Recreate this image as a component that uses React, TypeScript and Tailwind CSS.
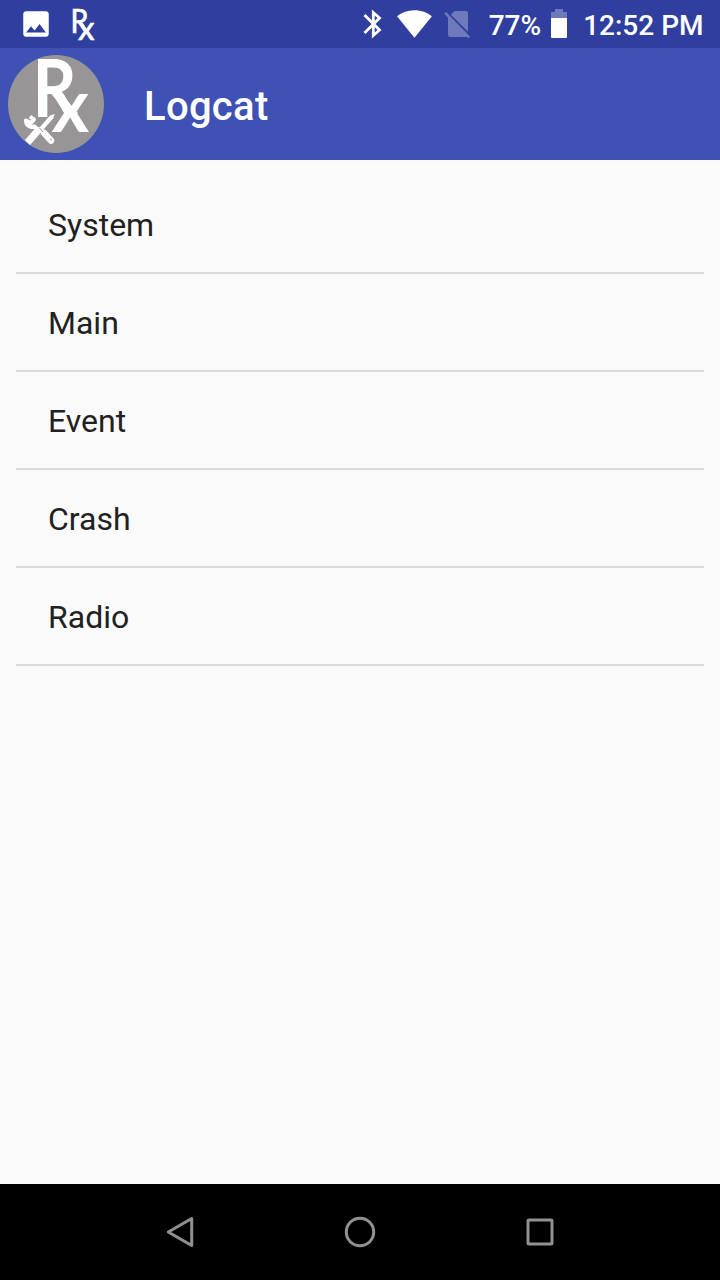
const logs = ["System", "Main", "Event", "Crash", "Radio"];

function RxGlyph() {
  return (
    <svg width="26" height="40" viewBox="0 0 26 40" className="ml-[20px] shrink-0 overflow-visible font-['Lato',sans-serif] font-normal" fill="#fff" stroke="#fff" strokeWidth="0.7">
      <text transform="translate(-2.6 28.800) scale(0.86 1)" fontSize="33.500">R</text>
      <text transform="translate(5 35.500)" fontSize="33">x</text>
    </svg>
  );
}

function StatusBar() {
  return (
    <header className="flex h-12 items-center bg-[#303f9f] font-['Roboto',sans-serif] text-[28px] leading-none font-medium text-white">
      <svg width="34" height="34" viewBox="0 0 24 24" className="ml-[19px] shrink-0" fill="currentColor">
        <path d="M21 19V5c0-1.1-.9-2-2-2H5c-1.1 0-2 .9-2 2v14c0 1.1.9 2 2 2h14c1.1 0 2-.9 2-2zM8.5 13.5l2.5 3.01L14.5 12l4.5 6H5l3.5-4.5z" />
      </svg>
      <RxGlyph />
      <div className="ml-auto flex h-12 items-center pr-[16.500px]">
        <svg width="20" height="30" viewBox="0 0 20 30" className="shrink-0" fill="none" stroke="currentColor" strokeWidth="2.8">
          <path d="M1.500 6 16.500 21 10.300 26.500V3.500L16.500 9 1.500 24" />
        </svg>
        <svg width="36" height="28" viewBox="0 0 36 28" className="ml-[14px] shrink-0" fill="currentColor">
          <path d="M0 6.2C4.700 2.400 10.700 .2 17.400 .2S30.400 2.400 34.900 6.200L17.450 27.700Z" />
        </svg>
        <svg width="27" height="29" viewBox="0 0 27 29" className="ml-[11px] mr-px shrink-0 opacity-30" fill="currentColor">
          <path d="M10.500 1h11a2.500 2.500 0 0 1 2.500 2.500v18.200L6.800 4.700ZM4 7.600 23.200 26.500q-.7.500-1.500.500H6.500A2.500 2.500 0 0 1 4 24.500ZM.3 3.700 2 2 26 26.500l-1.700 1.700Z" />
        </svg>
        <span className="ml-[17px] w-[62px] pt-[3px]">77%</span>
        <svg width="16" height="30" viewBox="0 0 16 30" className="shrink-0" fill="currentColor">
          <path opacity=".3" d="M4 0h8v3h4v6H0V3h4Z" />
          <path d="M0 9h16v19q0 1-1 1H1q-1 0-1-1Z" />
        </svg>
        <span className="ml-[16.500px] pt-[3px] whitespace-nowrap">12:52 PM</span>
      </div>
    </header>
  );
}

function AppLogo() {
  return (
    <svg width="96" height="98" viewBox="0 0 96 98" className="mt-[7px] ml-2 shrink-0 overflow-visible font-['Lato',sans-serif] font-bold" fill="#fff">
      <ellipse cx="48" cy="49" rx="48" ry="49" fill="#979595" />
      <text transform="translate(24.500 61.500) scale(0.860 1)" fontSize="80">R</text>
      <text transform="translate(43.500 77) scale(0.960 1)" fontSize="75">x</text>
      <path d="M40 35h10l20 23-6 5Z" />
      <path d="M17 85 27 73.500l5-1.500 10-11.500 4.700-1.500-1.500 4.500L35 75l-2 2.500L22 90Z" />
      <path d="M22 61.500l4 3-3 3.500-5-2.500c0 5 4 7.500 8.500 6l4 4" fill="none" stroke="#fff" strokeWidth="4" strokeLinejoin="round" />
      <path d="m36 78 7 7.500" stroke="#fff" strokeWidth="6.500" strokeLinecap="round" />
      <circle cx="43" cy="84.500" r="1" fill="#b5b3b3" />
      <path d="m31.500 73 3.500 4" stroke="#979595" strokeWidth="1" />
    </svg>
  );
}

function NavigationBar() {
  return (
    <nav className="flex h-24 items-center justify-center bg-black text-[#919191]">
      {[
        <path key="back" d="M4.300 16 27.700 2.500v27Z" />,
        <circle key="home" cx="16" cy="16" r="13.700" />,
        <rect key="recent" x="4" y="4" width="24" height="24" rx="1" />,
      ].map((shape, i) => (
        <div key={i} className="flex w-[180px] justify-center">
          <svg width="32" height="32" viewBox="0 0 32 32" fill="none" stroke="currentColor" strokeWidth="3" strokeLinejoin="round">{shape}</svg>
        </div>
      ))}
    </nav>
  );
}

export default function App() {
  return (
    <div className="flex h-[1280px] w-[720px] flex-col overflow-hidden bg-[#fafafa] font-['Roboto',sans-serif]">
      <StatusBar />
      <div className="flex h-28 bg-[#3f51b5] text-white">
        <AppLogo />
        <h1 className="ml-10 pt-[39px] text-[40px] leading-10 font-medium tracking-[0.3px]">Logcat</h1>
      </div>
      <main className="flex-1 px-4 pt-4">
        <ul>
          {logs.map((log) => (
            <li key={log} className="flex h-[98px] items-center border-b-2 border-[#dadada] px-8 pt-0.5 text-[32px] text-[#212121]">
              {log}
            </li>
          ))}
        </ul>
      </main>
      <NavigationBar />
    </div>
  );
}
